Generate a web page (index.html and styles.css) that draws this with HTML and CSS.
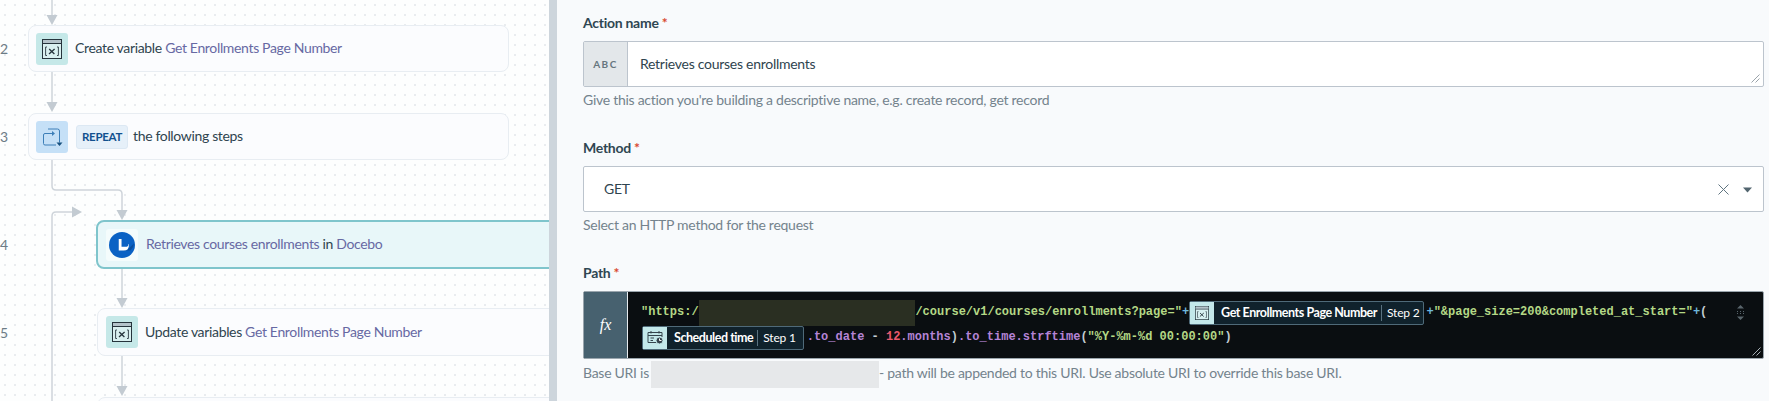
FILE: index.html
```html
<!DOCTYPE html>
<html lang="en">
<head>
<meta charset="utf-8">
<title>Recipe editor</title>
<link rel="stylesheet" href="styles.css">
</head>
<body>
<svg class="defs" width="0" height="0" aria-hidden="true">
  <symbol id="var-icon" viewBox="0 0 20 20">
    <rect x="0.5" y="0.5" width="19" height="19" fill="#fff" fill-opacity=".35" stroke="#26343c" stroke-width="1"/>
    <rect x="1" y="1" width="18" height="3" fill="#b4c3ca"/>
    <path d="M1 4.5H19" stroke="#26343c" stroke-width="1"/>
    <path d="M5 8H3.6V16.5H5M15 8H16.4V16.5H15" fill="none" stroke="#3b4a52" stroke-width="1"/>
    <path d="M7.2 10L12.4 15M12.6 10L7 15" fill="none" stroke="#26343c" stroke-width="1.3"/>
  </symbol>
</svg>
<main class="app">
  <section class="canvas">
    <svg class="wires" width="549" height="401" viewBox="0 0 549 401" aria-hidden="true">
      <g fill="none" stroke="#ced4da" stroke-width="1.5">
        <path d="M52 0V16"/>
        <path d="M52 72V103"/>
        <path d="M52 160V186Q52 190 56 190H118Q122 190 122 194V211"/>
        <path d="M52 401V216Q52 212 56 212H72"/>
        <path d="M122 269V299"/>
        <path d="M122 356V387"/>
      </g>
      <g fill="#c3cbd2">
        <path d="M46.500 15H57.500L52 25Z"/>
        <path d="M46.500 102H57.500L52 112Z"/>
        <path d="M116.500 210H127.500L122 220Z"/>
        <path d="M72 206.500V217.500L82 212Z"/>
        <path d="M116.500 298H127.500L122 308Z"/>
        <path d="M116.500 386H127.500L122 396Z"/>
      </g>
    </svg>
    <div class="step step-2">
      <span class="num">2</span>
      <div class="card">
        <span class="tile tile-teal"><svg width="20" height="20"><use href="#var-icon"/></svg></span>
        <p class="card-text">Create variable <span class="ref">Get Enrollments Page Number</span></p>
      </div>
    </div>
    <div class="step step-3">
      <span class="num">3</span>
      <div class="card">
        <span class="tile tile-blue">
          <svg width="21" height="20" viewBox="0 0 21 20" fill="none" stroke="#3d7fb8" stroke-width="1">
            <path d="M10.500 6.500H3Q1.500 6.500 1.500 8V16.500Q1.500 18 3 18H14"/>
            <path d="M10 4L13 6.500L10 9Z" fill="#3d7fb8" stroke="none"/>
            <path d="M6 2H15.500Q17.500 2 17.500 4V15.500"/>
            <path d="M14.500 15.500H20.500L17.500 19Z" fill="#17507f" stroke="none"/>
          </svg>
        </span>
        <span class="tag">REPEAT</span>
        <p class="card-text">the following steps</p>
      </div>
    </div>
    <div class="step step-4">
      <span class="num">4</span>
      <div class="card card-nested card-active">
        <span class="tile tile-white">
          <svg width="26" height="26" viewBox="0 0 28 28">
            <circle cx="14" cy="14" r="14" fill="#0b62c4"/>
            <path d="M13 20L23 20Q27 16 27 12L20 19Z" fill="#094f9f"/>
            <path d="M10.500 7.500H13.500V16H17.500Q21 16 21 13.500V13H21.500V14Q21.500 20 16 20H10.500Z" fill="#fff"/>
          </svg>
        </span>
        <p class="card-text"><span class="ref">Retrieves courses enrollments</span> in <span class="ref">Docebo</span></p>
      </div>
    </div>
    <div class="step step-5">
      <span class="num">5</span>
      <div class="card card-nested">
        <span class="tile tile-teal"><svg width="20" height="20"><use href="#var-icon"/></svg></span>
        <p class="card-text">Update variables <span class="ref">Get Enrollments Page Number</span></p>
      </div>
    </div>
    <div class="step step-6">
      <div class="card card-nested card-cut"></div>
    </div>
  </section>
  <div class="divider"></div>
  <section class="panel">
    <div class="field">
      <div class="label">Action name<span class="req">*</span></div>
      <div class="box">
        <span class="addon">ABC</span>
        <span class="value value-name">Retrieves courses enrollments</span>
        <svg class="grip" width="9" height="9" viewBox="0 0 9 9" stroke="#9aa3aa" fill="none"><path d="M0.500 8.500L8.500 0.500M4.500 8.500L8.500 4.500"/></svg>
      </div>
      <p class="help">Give this action you're building a descriptive name, e.g. create record, get record</p>
    </div>
    <div class="field">
      <div class="label">Method<span class="req">*</span></div>
      <div class="box box-select">
        <span class="value value-get">GET</span>
        <svg class="clear" width="11" height="11" viewBox="0 0 11 11" stroke="#5f7480" stroke-width="1" fill="none"><path d="M0.500 0.500L10.500 10.500M10.500 0.500L0.500 10.500"/></svg>
        <svg class="caret" width="9" height="6" viewBox="0 0 9 6"><path d="M0 0.500H9L4.500 5.500Z" fill="#52656f"/></svg>
      </div>
      <p class="help">Select an HTTP method for the request</p>
    </div>
    <div class="field">
      <div class="label">Path<span class="req">*</span></div>
      <div class="box box-code">
        <span class="addon addon-fx">fx</span>
        <div class="code">
          <div class="line">
            <span class="str clip">"https://</span><span class="mask-dark"></span><span class="str">/course/v1/courses/enrollments?page="</span><span class="op">+</span>
            <span class="pill pill-var">
              <span class="pill-icon"><svg width="14" height="14"><use href="#var-icon"/></svg></span>
              <b class="pill-name">Get Enrollments Page Number</b><span class="pill-step">Step 2</span>
            </span>
            <span class="op">+</span><span class="str">"&amp;page_size=200&amp;completed_at_start="</span><span class="op">+</span><span class="punc">(</span>
          </div>
          <div class="line">
            <span class="pill pill-time">
              <span class="pill-icon">
                <svg width="17" height="15" viewBox="0 0 17 15" fill="none" stroke="#34444d" stroke-width="1">
                  <path d="M10 12.500H1V2.500H15V7"/><path d="M1 5.500H15M4 1V3.500M12 1V3.500M3.500 8H7M3.500 10.500H6" />
                  <circle cx="12.500" cy="10.500" r="3.500" fill="#34444d" stroke="#c3e8ea"/><path d="M12.500 8.500V10.500H14.500" stroke="#fff"/>
                </svg>
              </span>
              <b class="pill-name">Scheduled time</b><span class="pill-step">Step 1</span>
            </span>
            <span class="meth">.to_date</span><span class="punc">&nbsp;-&nbsp;</span><span class="num-lit">12</span><span class="meth">.months</span><span class="punc">)</span><span class="meth">.to_time.strftime</span><span class="punc">(</span><span class="str">"%Y-%m-%d 00:00:00"</span><span class="punc">)</span>
          </div>
        </div>
        <svg class="scroller" width="9" height="15" viewBox="0 0 9 15" fill="#59656c"><path d="M4.500 0L8 3.500H1ZM4.500 15L8 11.500H1Z"/><path d="M1 6h1v1H1zM4 6h1v1H4zM7 6h1v1H7zM1 8h1v1H1zM4 8h1v1H4zM7 8h1v1H7z"/></svg>
        <svg class="grip grip-code" width="9" height="9" viewBox="0 0 9 9" stroke="#a6afb5" fill="none"><path d="M0.500 8.500L8.500 0.500M4.500 8.500L8.500 4.500"/></svg>
      </div>
      <p class="help help-path">Base URI is<span class="mask-light"></span>- path will be appended to this URI. Use absolute URI to override this base URI.</p>
    </div>
  </section>
</main>
</body>
</html>
```
FILE: styles.css
```css
* { box-sizing: border-box; }
html, body { margin: 0; height: 100%; }
body {
  font-family: "Lato", "Noto Sans", sans-serif;
  font-size: 14px;
  letter-spacing: -0.27px;
  color: #2f444f;
  overflow: hidden;
  background: #f8fafc;
}
p { margin: 0; }
.defs { position: absolute; }

.app { display: flex; height: 401px; }

.canvas {
  position: relative;
  flex: none;
  width: 549px;
  height: 401px;
  overflow: hidden;
  padding-top: 25px;
  letter-spacing: -0.34px;
  background-color: #fdfefe;
  background-image: radial-gradient(circle at 1px 1px, #e9ecef 1px, transparent 1.2px);
  background-size: 10px 10px;
  background-position: 4px 4px;
}
.wires { position: absolute; left: 0; top: 0; }

.step { position: relative; display: flex; align-items: center; }
.step-3 { margin-top: 41px; }
.step-4 { margin-top: 60px; }
.step-5 { margin-top: 39px; }
.step-6 { margin-top: 41px; padding-left: 97px; }
.num { flex: none; width: 28px; color: #6d7c86; font-size: 14px; }

.card {
  flex: none;
  display: flex;
  align-items: center;
  width: 481px;
  height: 47px;
  padding-left: 7px;
  background: #fbfcfe;
  border: 1px solid #e8edf2;
  border-radius: 8px;
}
.card-nested { width: 470px; margin-left: 69px; height: 48px; padding-left: 8px; }
.card-active {
  height: 49px;
  margin-left: 68px;
  background: #e8f7f9;
  border: 2px solid #7fc5cc;
}
.card-cut { margin-left: 0; }

.tile {
  flex: none;
  display: flex;
  align-items: center;
  justify-content: center;
  width: 32px;
  height: 32px;
  border-radius: 3px;
  margin-right: 7px;
}
.tile-teal { background: #c5e8e8; }
.tile-blue { background: #c5e0f7; margin-right: 8px; }
.tile-white { background: #f4fcfc; margin-right: 8px; }

.card-text { white-space: nowrap; padding-bottom: 2px; }
.ref { color: #6769a3; }
.tag {
  padding: 3px 5px;
  margin-right: 5px;
  font-weight: 700;
  font-size: 11.5px;
  letter-spacing: -0.3px;
  line-height: 16px;
  color: #12508f;
  background: #e6f0f9;
  border: 1px solid #dce8f3;
  border-radius: 3px;
}

.divider { flex: none; width: 8px; background: #cdd5dc; }

.panel { flex: 1; min-width: 0; padding: 13px 5px 0 26px; }
.field { margin-bottom: 28px; }
.label { font-weight: 700; line-height: 20px; margin-bottom: 8px; color: #2f4652; }
.req { color: #d9482f; margin-left: 3px; }

.box {
  position: relative;
  display: flex;
  align-items: center;
  height: 46px;
  background: #fff;
  border: 1px solid #bcc4cd;
  border-radius: 2px;
}
.addon {
  flex: none;
  display: flex;
  align-items: center;
  justify-content: center;
  align-self: stretch;
  width: 44px;
  background: #e3e7ea;
  border-right: 1px solid #bcc4cd;
  color: #66767f;
  font-size: 10px;
  font-weight: 700;
  letter-spacing: 1.5px;
}
.value { padding-bottom: 2px; }
.value-name { margin-left: 12px; }
.value-get { margin-left: 20px; }
.grip { position: absolute; right: 3px; bottom: 3px; }
.clear { position: absolute; left: 1134px; top: 17px; }
.caret { position: absolute; left: 1159px; top: 20px; }

.help { margin-top: 3px; line-height: 20px; color: #74838d; white-space: nowrap; }
.help-path { display: flex; margin-top: 4px; }
.mask-light { flex: none; width: 228px; height: 27px; margin: -2px 0 -5px 2px; background: #e6e8ea; }

.box-code {
  height: 68px;
  background: #0a0e11;
  border-color: #9aa5ad;
}
.addon-fx {
  background: #47616f;
  border-right: 1px solid #e6eaee;
  color: #fff;
  font-family: "Liberation Serif", serif;
  font-style: italic;
  font-size: 16px;
  font-weight: 400;
  letter-spacing: 0;
}
.code {
  display: flex;
  flex-direction: column;
  padding-left: 13px;
  font-family: "Liberation Mono", monospace;
  font-size: 12px;
  font-weight: 700;
  letter-spacing: 0;
  white-space: pre;
}
.line { display: flex; align-items: center; height: 25px; }
.str, .op, .punc, .meth, .num-lit { margin-bottom: 2px; }
.str { color: #b4d886; }
.op { color: #6fb7dd; }
.punc { color: #c2ccd2; }
.meth { color: #b584d6; }
.num-lit { color: #e8596c; }
.mask-dark { flex: none; width: 216px; height: 26px; background: #2a2f22; }
.clip { margin-right: -6.4px; }

.pill {
  flex: none;
  display: flex;
  align-items: center;
  height: 24px;
  margin: 0 2px 0 0;
  background: #10222c;
  border: 1px solid #4f6a79;
  border-radius: 2px;
  font-family: "Lato", "Noto Sans", sans-serif;
  color: #fff;
}
.pill-time { margin-left: 1px; margin-right: 3px; padding-right: 3px; }
.pill-icon {
  flex: none;
  display: flex;
  align-items: center;
  justify-content: center;
  align-self: stretch;
  width: 24px;
  background: #c3e8ea;
}
.pill-name { margin-left: 7px; font-size: 12.5px; font-weight: 700; letter-spacing: -0.45px; }
.pill-step {
  margin-left: 4px;
  padding: 0 4px 0 5px;
  border-left: 1px solid #5a7280;
  font-size: 12px;
  letter-spacing: -0.2px;
  line-height: 16px;
  font-weight: 400;
}
.scroller { position: absolute; left: 1152px; top: 13px; }
.grip-code { right: 2px; bottom: 2px; }
```
